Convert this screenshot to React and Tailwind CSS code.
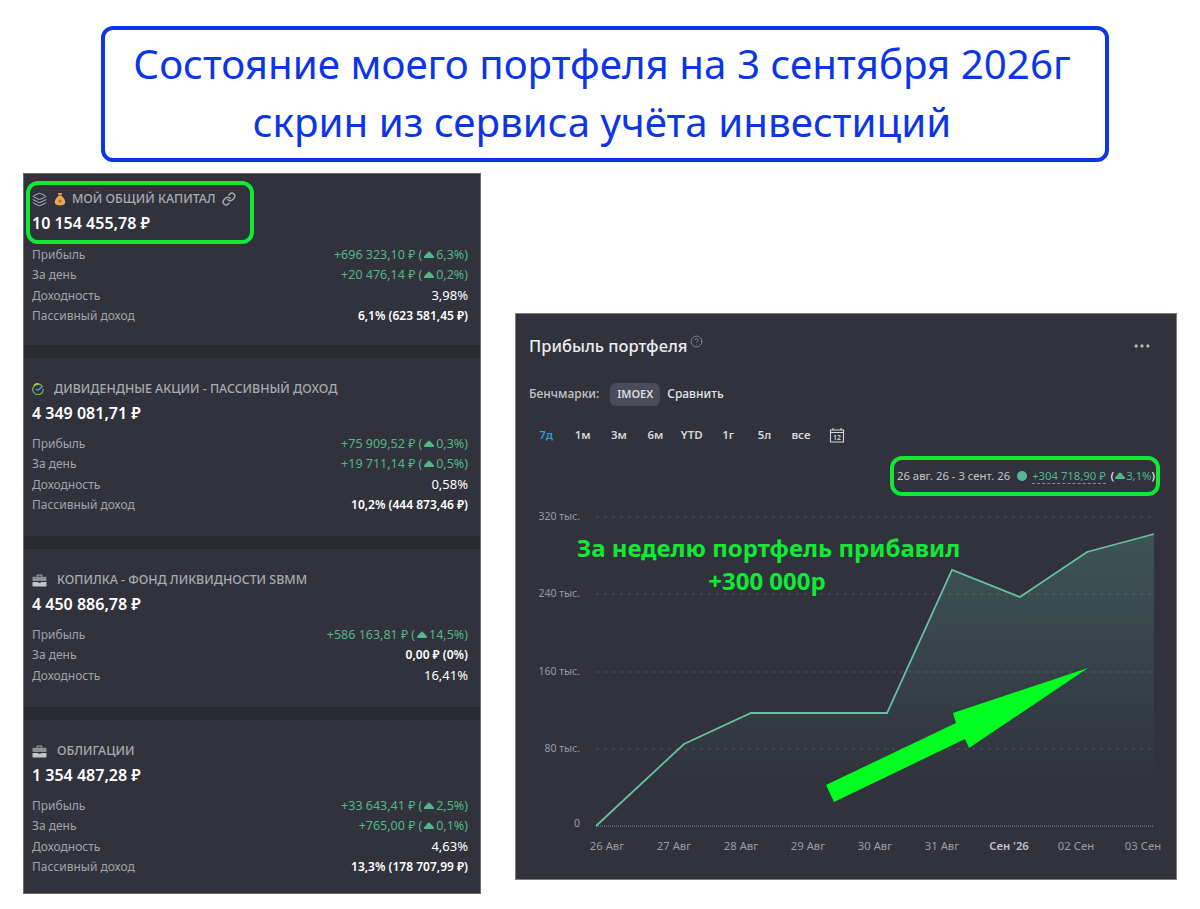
import { Layers, Link, Ellipsis, CircleHelp } from 'lucide-react';

const groups = [
  {
    icon: 'bag', title: 'МОЙ ОБЩИЙ КАПИТАЛ', total: '10 154 455,78 ₽', highlighted: true,
    rows: [
      { label: 'Прибыль', money: '+696 323,10 ₽', pct: '6,3%' },
      { label: 'За день', money: '+20 476,14 ₽', pct: '0,2%' },
      { label: 'Доходность', plain: '3,98%' },
      { label: 'Пассивный доход', bold: '6,1% (623 581,45 ₽)' },
    ],
    height: 'h-[171px]',
  },
  {
    icon: 'sber', title: 'ДИВИДЕНДНЫЕ АКЦИИ - ПАССИВНЫЙ ДОХОД', total: '4 349 081,71 ₽',
    rows: [
      { label: 'Прибыль', money: '+75 909,52 ₽', pct: '0,3%' },
      { label: 'За день', money: '+19 711,14 ₽', pct: '0,5%' },
      { label: 'Доходность', plain: '0,58%' },
      { label: 'Пассивный доход', bold: '10,2% (444 873,46 ₽)' },
    ],
    height: 'h-[178px]',
  },
  {
    icon: 'case', title: 'КОПИЛКА - ФОНД ЛИКВИДНОСТИ SBMM', total: '4 450 886,78 ₽',
    rows: [
      { label: 'Прибыль', money: '+586 163,81 ₽', pct: '14,5%' },
      { label: 'За день', bold: '0,00 ₽ (0%)' },
      { label: 'Доходность', plain: '16,41%' },
    ],
    height: 'h-[158px]',
  },
  {
    icon: 'case', title: 'ОБЛИГАЦИИ', total: '1 354 487,28 ₽',
    rows: [
      { label: 'Прибыль', money: '+33 643,41 ₽', pct: '2,5%' },
      { label: 'За день', money: '+765,00 ₽', pct: '0,1%' },
      { label: 'Доходность', plain: '4,63%' },
      { label: 'Пассивный доход', bold: '13,3% (178 707,99 ₽)' },
    ],
    height: 'h-[173px]',
  },
];

const periods = ['7д', '1м', '3м', '6м', 'YTD', '1г', '5л', 'все'];

const dates = [
  [607, '26 Авг'], [674, '27 Авг'], [741, '28 Авг'], [808, '29 Авг'], [875, '30 Авг'],
  [942, '31 Авг'], [1009, "Сен '26"], [1076, '02 Сен'], [1143, '03 Сен'],
];

const levels = [[517, '320 тыс.'], [594, '240 тыс.'], [672, '160 тыс.'], [749, '80 тыс.']];

const linePoints = '596,826 684,744 751,713 887,713 952,570 1020,597 1087,552 1154,534';

function Caret({ className = '' }) {
  return (
    <svg viewBox="0 0 12 8" className={`inline-block w-[12px] h-[8px] ${className}`}>
      <path d="M6 .5 C6.600 .5 7 1 7.400 1.600 L10.600 5 C11.600 6.200 11 7 10 7 H2 C1 7 .4 6.200 1.400 5 L4.600 1.600 C5 1 5.400 .5 6 .5Z" fill="currentColor" />
    </svg>
  );
}

function GroupIcon({ type }) {
  if (type === 'bag') {
    return (
      <span className="flex items-center gap-[7px]">
        <Layers size={15} strokeWidth={1.5} className="text-[#b9bac0]" />
        <svg viewBox="0 0 14 16" className="w-[12px] h-[14px]">
          <path d="M4.500 1 L9.500 1 L8.500 4 L5.500 4Z" fill="#e8a14f" />
          <path d="M5 4.500 H9 C12 7 13.500 10 13 12.500 C12.500 15 10 15.500 7 15.500 C4 15.500 1.500 15 1 12.500 C.5 10 2 7 5 4.500Z" fill="#eda658" />
          <circle cx="7" cy="10.500" r="2" fill="#b8742c" />
        </svg>
      </span>
    );
  }
  if (type === 'sber') {
    return (
      <svg viewBox="0 0 16 16" className="w-[12px] h-[12px]">
        <path d="M14 5 A7 7 0 1 0 15 8" fill="none" stroke="#6fb04a" strokeWidth="1.800" />
        <path d="M2.500 3.500 A7 7 0 0 1 9 1" fill="none" stroke="#d8c83a" strokeWidth="1.800" />
        <path d="M5 8 L7.500 10 L14 4.500" fill="none" stroke="#4aa3d8" strokeWidth="1.800" />
      </svg>
    );
  }
  return (
    <svg viewBox="0 0 16 14" className="w-[15px] h-[13px]">
      <path d="M5 3 V1.500 C5 .8 5.500 .5 6 .5 H10 C10.500 .5 11 .8 11 1.500 V3 H9.800 V1.700 H6.200 V3Z" fill="#a6a8ae" />
      <path d="M.5 4 C.5 3.300 1 3 1.500 3 H14.500 C15 3 15.500 3.300 15.500 4 V7.500 H.5Z" fill="#8d8f96" />
      <path d="M.5 8.500 H6.500 V9.500 H9.500 V8.500 H15.500 V12.500 C15.500 13.200 15 13.500 14.500 13.500 H1.500 C1 13.500 .5 13.200 .5 12.500Z" fill="#c4c5ca" />
    </svg>
  );
}

function Row({ row }) {
  return (
    <div className="flex justify-between items-center h-[20.3px] text-[12px]">
      <span className="text-[#a2a4aa]">{row.label}</span>
      {row.money && (
        <span className="text-[#52b788] flex items-center text-[12.5px]">
          <span>{row.money}</span>
          <span className="ml-[3px]">(</span>
          <Caret className="mx-[1px]" />
          <span>{row.pct})</span>
        </span>
      )}
      {row.plain && <span className="text-white text-[13px]">{row.plain}</span>}
      {row.bold && <span className="text-white font-semibold text-[12px]">{row.bold}</span>}
    </div>
  );
}

function Group({ group }) {
  const head = (
    <>
      <div className={`flex items-center h-[20px] ${group.highlighted ? 'gap-[6px]' : 'gap-[10px]'}`}>
        <GroupIcon type={group.icon} />
        <span className="text-[12.400px] font-medium text-[#a8aab0]">{group.title}</span>
        {group.highlighted && <Link size={14} strokeWidth={2.500} className="text-[#a8aab0]" />}
      </div>
      <div className="mt-[2px] text-[16px] leading-[24px] font-semibold text-white">{group.total}</div>
    </>
  );
  return (
    <section className={`${group.height} pl-[8px] pr-[12px] ${group.highlighted ? 'pt-[7px]' : 'pt-[21px]'}`}>
      {group.highlighted ? (
        <div className="-ml-[6px] mb-[1px] w-[228px] h-[63px] border-[4px] border-[#10ea35] rounded-[12px] pl-[2px] pt-[4px]">
          {head}
        </div>
      ) : (
        <div className="h-[55px]">{head}</div>
      )}
      <div>
        {group.rows.map((row) => <Row key={row.label} row={row} />)}
      </div>
    </section>
  );
}

function Chart() {
  return (
    <svg viewBox="516 500 660 379" className="block w-[660px] h-[379px]">
      <defs>
        <linearGradient id="area" gradientUnits="userSpaceOnUse" x1="0" y1="534" x2="0" y2="790">
          <stop offset="0%" stopColor="#5ab59a" stopOpacity="0.26" />
          <stop offset="100%" stopColor="#5ab59a" stopOpacity="0" />
        </linearGradient>
      </defs>
      {levels.map(([y, label]) => (
        <g key={label}>
          <line x1="596" x2="1154" y1={y} y2={y} stroke="#50525b" strokeDasharray="3 5" />
          <text x="580" y={y + 3} textAnchor="end" fontSize="10.500" fill="#9a9ca3">{label}</text>
        </g>
      ))}
      <text x="580" y="827" textAnchor="end" fontSize="10.500" fill="#9a9ca3">0</text>
      <polygon points={`${linePoints} 1154,826 596,826`} fill="url(#area)" />
      <line x1="596" x2="1154" y1="826" y2="826" stroke="#8b8d94" strokeDasharray="1 1" />
      <polyline points={linePoints} fill="none" stroke="#66bfa6" strokeWidth="1.800" />
      {dates.map(([x, label]) => (
        <text key={label} x={x} y="850" textAnchor="middle" fontSize="11.300" fontWeight={label.includes("'") ? 600 : 400} fill={label.includes("'") ? '#c0c1c6' : '#9a9ca3'}>{label}</text>
      ))}
      <polygon points="826,785 834,802 965,739 969,748 1088,668 953,713 956,723" fill="#00ff21" />
    </svg>
  );
}

export default function App() {
  return (
    <div className="w-[1200px] h-[909px] bg-white pt-[26px] overflow-hidden font-['Noto_Sans','Open_Sans',sans-serif]">
      <header className="ml-[101px] w-[1008px] h-[136px] border-[4px] border-[#0c35e8] rounded-[12px] flex flex-col items-center justify-center pr-[6px] text-[#0c35e8] text-[40.300px] leading-[58px]">
        <div className="-mt-[2px]">Состояние моего портфеля на 3 сентября 2026г</div>
        <div>скрин из сервиса учёта инвестиций</div>
      </header>

      <div className="flex items-start mt-[12px] ml-[24px]">
        <aside className="w-[456px] bg-[#2a2b32] flex flex-col gap-[13px] outline outline-1 outline-[#6b6c72]">
          {groups.map((group) => (
            <div key={group.title} className="bg-[#31323c]"><Group group={group} /></div>
          ))}
        </aside>

        <main className="relative ml-[36px] mt-[140px] w-[660px] h-[565px] bg-[#31323c] outline outline-1 outline-[#7b7c80]">
          <div className="flex justify-between items-center pl-[13px] pr-[24px] pt-[19px]">
            <h1 className="flex items-start text-[16.500px] leading-[26px] font-medium text-[#eeeef0]">
              Прибыль портфеля
              <CircleHelp size={13} strokeWidth={1.300} className="ml-[3px] mt-[2px] text-[#a0a2a8]" />
            </h1>
            <Ellipsis size={20} className="text-[#b5b6bb]" />
          </div>

          <div className="flex items-center pl-[13px] mt-[23px] h-[24px] text-[12px]">
            <span className="text-[#c4c5ca] font-medium">Бенчмарки:</span>
            <span className="ml-[11px] w-[50px] h-[23px] rounded-[6px] bg-[#4a4c59] flex items-center justify-center text-[11px] font-semibold text-[#dcdde0]">IMOEX</span>
            <span className="ml-[7px] text-[#e4e5e8] font-medium">Сравнить</span>
          </div>

          <div className="flex items-center pl-[12px] mt-[18px] h-[22px] text-[11.500px] font-semibold text-[#d6d7da]">
            {periods.map((p, i) => (
              <span key={p} className={i === 0 ? 'w-[36.400px] text-center text-[#2f9bdc]' : 'w-[36.400px] text-center'}>{p}</span>
            ))}
            <span className="w-[36.400px] flex justify-center">
              <svg viewBox="0 0 16 16" className="w-[16px] h-[16px] text-[#d6d7da]">
                <path d="M1.500 3 H14.500 V15 H1.500Z M1.500 5.500 H14.500 M4 1 V3 M12 1 V3" fill="none" stroke="currentColor" strokeWidth="1.100" />
                <text x="8" y="13.300" textAnchor="middle" fontSize="7" fill="currentColor">12</text>
              </svg>
            </span>
          </div>

          <div className="flex justify-end pr-[16px] mt-[10px]">
            <div className="w-[270px] h-[40px] border-[4px] border-[#10ea35] rounded-[12px] flex items-center pl-[3px] gap-[5px] text-[11.300px] text-[#c4c5ca] whitespace-nowrap">
              <span>26 авг. 26 - 3 сент. 26</span>
              <span className="ml-[2px] w-[10px] h-[10px] shrink-0 rounded-full bg-[#5ab59a]" />
              <span className="text-[#52b788] border-b border-dashed border-[#8b8d94] leading-[14px]">+304 718,90 ₽</span>
              <span className="flex items-center text-[#52b788]">
                <span className="text-white">(</span><Caret />3,1%<span className="text-white">)</span>
              </span>
            </div>
          </div>

          <div className="absolute left-0 bottom-0"><Chart /></div>

          <div className="absolute left-[61px] top-[217px] w-[380px] whitespace-nowrap text-center text-[24px] leading-[33px] font-bold text-[#10ea35]">
            За неделю портфель прибавил<br />+300 000р
          </div>
        </main>
      </div>
    </div>
  );
}
